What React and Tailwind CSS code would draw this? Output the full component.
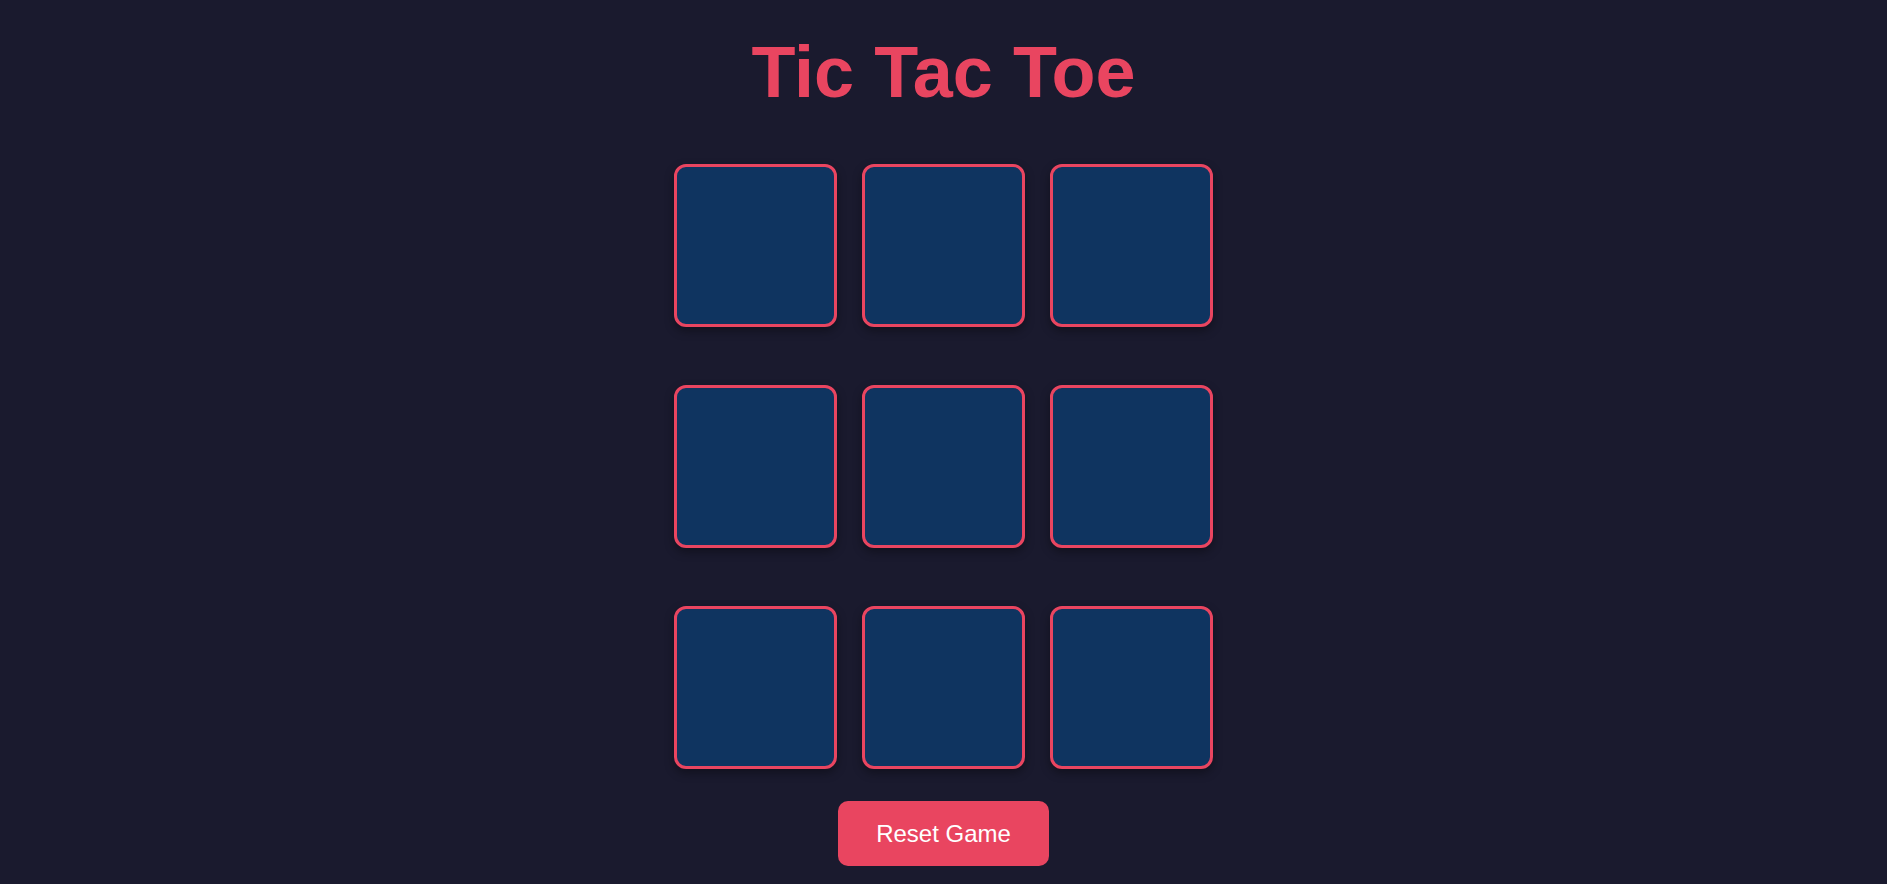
import { useState } from "react";

export default function App() {
  const [board, setBoard] = useState(Array(9).fill(null));
  const [xNext, setXNext] = useState(true);

  const play = (i) => {
    if (board[i]) return;
    const next = board.slice();
    next[i] = xNext ? "X" : "O";
    setBoard(next);
    setXNext(!xNext);
  };

  const reset = () => {
    setBoard(Array(9).fill(null));
    setXNext(true);
  };

  return (
    <div className="min-h-screen bg-[#1a1a2e] flex flex-col items-center pt-[36px] font-['Liberation_Sans',Arial,sans-serif]">
      <h1 className="text-[72px] leading-[72px] font-bold text-[#e94560] mb-[56px]">
        Tic Tac Toe
      </h1>

      <div className="grid grid-cols-3 gap-x-[25px] gap-y-[58px]">
        {board.map((v, i) => (
          <button
            key={i}
            onClick={() => play(i)}
            className="w-[163px] h-[163px] bg-[#0f3460] border-[3px] border-[#e94560] rounded-[12px] shadow-[0_4px_10px_rgba(0,0,0,0.35)] text-[#e94560] text-[64px] font-bold flex items-center justify-center"
          >
            {v}
          </button>
        ))}
      </div>

      <button
        onClick={reset}
        className="mt-[32px] w-[211px] h-[65px] bg-[#e94560] text-white text-[24px] rounded-[10px] flex items-center justify-center"
      >
        Reset Game
      </button>
    </div>
  );
}
